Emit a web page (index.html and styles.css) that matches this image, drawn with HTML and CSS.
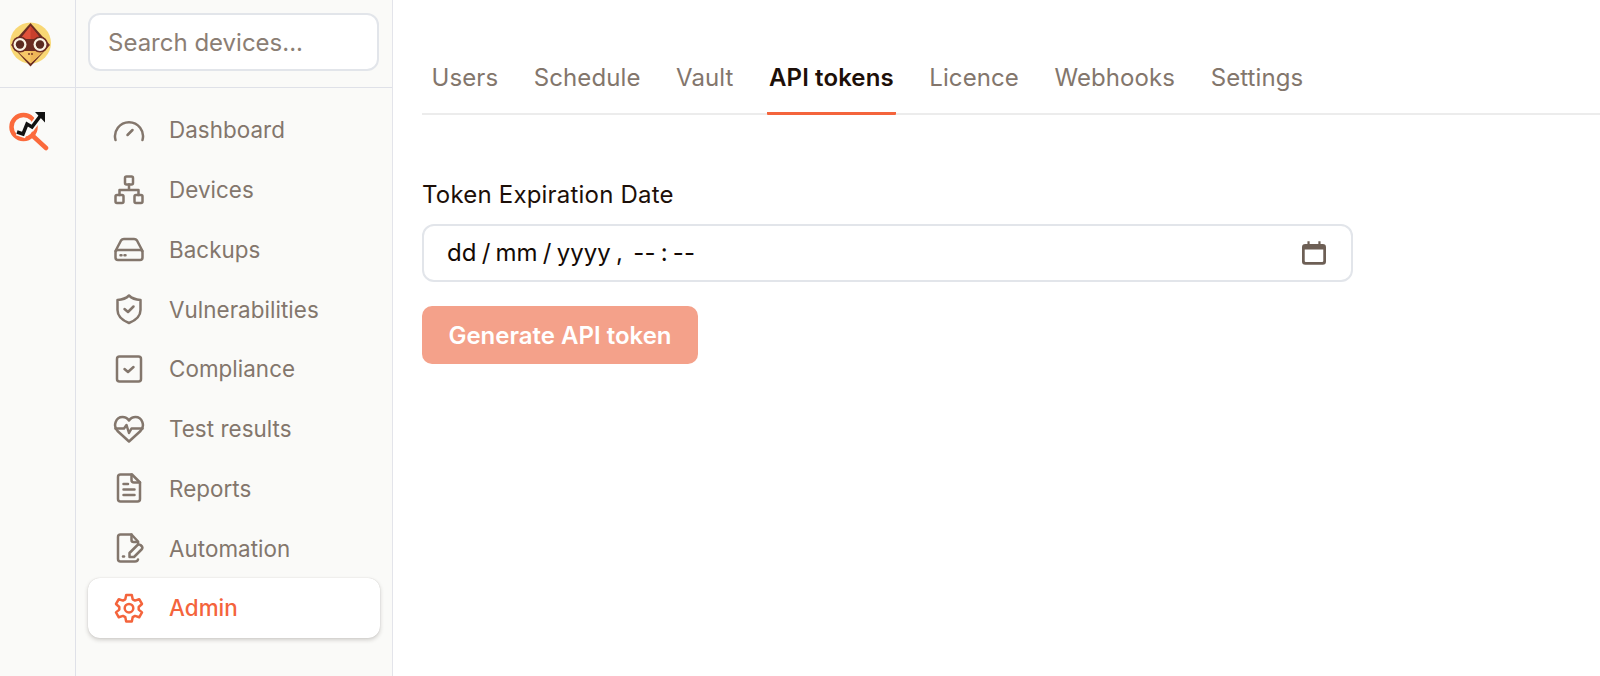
FILE: index.html
```html
<!DOCTYPE html>
<html lang="en">
<head>
<meta charset="utf-8">
<title>API tokens</title>
<link rel="stylesheet" href="styles.css">
</head>
<body>
<div class="app">
  <aside class="rail">
    <div class="rail-top">
      <svg class="logo" viewBox="0 0 42 46" width="42" height="46">
        <circle cx="20.500" cy="21" r="20.500" fill="#f8d774"/>
        <path d="M20.500 1 L40 23 L20.500 44.500 L1 23Z" fill="#6b2c22"/>
        <path d="M20.500 4 L31 17 H10Z" fill="#e0523a"/>
        <path d="M20.500 4 L31 17 H20.500Z" fill="#c93f2c"/>
        <path d="M20.500 41.500 L7 29 H34Z" fill="#f6c768"/>
        <path d="M20.500 41.500 V29 H34Z" fill="#eeb658"/>
        <circle cx="10" cy="22.500" r="8" fill="#6b2c22"/>
        <circle cx="30" cy="22.500" r="8" fill="#6b2c22"/>
        <circle cx="10" cy="22.500" r="6.500" fill="#fbf3e4"/>
        <circle cx="30" cy="22.500" r="6.500" fill="#fbf3e4"/>
        <circle cx="10" cy="22.500" r="4.200" fill="#5b2a20"/>
        <circle cx="30" cy="22.500" r="4.200" fill="#5b2a20"/>
        <circle cx="19" cy="32" r=".9" fill="#6b2c22"/>
        <circle cx="22" cy="32" r=".9" fill="#6b2c22"/>
      </svg>
    </div>
    <div class="rail-app">
      <svg viewBox="0 0 42 42" width="42" height="42">
        <circle cx="15.500" cy="18" r="12" fill="none" stroke="#fb6a3c" stroke-width="4.500"/>
        <path d="M25.500 27.500 L38 39" stroke="#fb6a3c" stroke-width="4.500" stroke-linecap="round"/>
        <path d="M9 23 L15 25 L19 15 L24 18 L33 6" fill="none" stroke="#fafaf8" stroke-width="7"/>
        <path d="M9 23 L15 25 L19 15 L24 18 L33 6" fill="none" stroke="#111" stroke-width="3.500"/>
        <path d="M27 3 H37 V13.500 Z" fill="#111"/>
      </svg>
    </div>
  </aside>
  <aside class="sidebar">
    <div class="search-area">
      <div class="search">Search devices...</div>
    </div>
    <nav class="nav">
      <a class="nav-item">
        <svg class="nav-icon" viewBox="0 0 32 32"><path d="M2.500 26 A14 14 0 1 1 29.500 26"/><path d="M14.500 21 L19.500 16"/></svg>
        <span>Dashboard</span>
      </a>
      <a class="nav-item">
        <svg class="nav-icon" viewBox="0 0 32 32"><rect x="12" y="2.500" width="8" height="8" rx="1.500"/><rect x="2.500" y="21" width="8" height="8" rx="1.500"/><rect x="21.500" y="21" width="8" height="8" rx="1.500"/><path d="M16 10.500 V16 M6.500 21 V16 H25.500 V21"/></svg>
        <span>Devices</span>
      </a>
      <a class="nav-item">
        <svg class="nav-icon" viewBox="0 0 32 32"><path d="M2.500 18 L8 7.500 Q9 6 11 6 H21 Q23 6 24 7.500 L29.500 18"/><rect x="2.500" y="17" width="27" height="10" rx="2.500"/><path d="M7.500 22.300 H8.500 M11.500 22.300 H12.500"/></svg>
        <span>Backups</span>
      </a>
      <a class="nav-item">
        <svg class="nav-icon" viewBox="0 0 32 32"><path d="M16 2.500 Q20 6.500 27.500 7 V17 Q27.500 25.500 16 30 Q4.500 25.500 4.500 17 V7 Q12 6.500 16 2.500Z"/><path d="M11.500 16 L15 19 L20.500 13.500"/></svg>
        <span>Vulnerabilities</span>
      </a>
      <a class="nav-item">
        <svg class="nav-icon" viewBox="0 0 32 32"><rect x="4" y="3.500" width="24" height="25" rx="2.500"/><path d="M11.500 16 L15 19 L20.500 14"/></svg>
        <span>Compliance</span>
      </a>
      <a class="nav-item">
        <svg class="nav-icon" viewBox="0 0 32 32"><path d="M16 28.500 L4.500 18 C-.500 12.500 3 4 9.500 4 C12 4 14.500 5.200 16 7.500 C17.500 5.200 20 4 22.500 4 C29 4 32.500 12.500 27.500 18Z"/><path d="M2.500 15.500 H11 L13.500 12 L16 20 L18.500 15.500 H29.500"/></svg>
        <span>Test results</span>
      </a>
      <a class="nav-item">
        <svg class="nav-icon" viewBox="0 0 32 32"><path d="M19 2.500 H7.500 Q5 2.500 5 5 V27 Q5 29.500 7.500 29.500 H24.500 Q27 29.500 27 27 V10.500Z"/><path d="M18.500 2.500 V8 Q18.500 10.500 21 10.500 H27"/><path d="M10.500 12 H15 M10.500 17.500 H21.500 M10.500 23 H21.500"/></svg>
        <span>Reports</span>
      </a>
      <a class="nav-item">
        <svg class="nav-icon" viewBox="0 0 32 32"><path d="M25 11 V9.500 L18.500 2.500 H7.500 Q5 2.500 5 5 V27 Q5 29.500 7.500 29.500 H22 Q24.500 29.500 25 27.500"/><path d="M18.500 2.500 V8 Q18.500 10 20.500 10 H25"/><path d="M10 24.500 H11"/><path d="M16.500 25 V21 L24 13.500 Q25.500 12 27.500 13 L29 14.500 Q30 16 28.500 17.500 L21 25Z"/></svg>
        <span>Automation</span>
      </a>
      <a class="nav-item active">
        <svg class="nav-icon" viewBox="0 0 32 32"><path d="M13.200 3 L18.800 3 L19.700 7.300 L22 8.600 L26.200 7.200 L29 12 L25.700 15 V17.600 L29 20.400 L26.200 25.300 L22 23.900 L19.700 25.200 L18.800 29.500 H13.200 L12.300 25.200 L10 23.900 L5.800 25.300 L3 20.400 L6.300 17.600 V15 L3 12 L5.800 7.200 L10 8.600 L12.300 7.300Z"/><circle cx="16" cy="16.200" r="4.300"/></svg>
        <span>Admin</span>
      </a>
    </nav>
  </aside>
  <main class="main">
    <div class="tabs">
      <a class="tab">Users</a>
      <a class="tab">Schedule</a>
      <a class="tab">Vault</a>
      <a class="tab current">API tokens</a>
      <a class="tab">Licence</a>
      <a class="tab">Webhooks</a>
      <a class="tab">Settings</a>
    </div>
    <form class="form">
      <div class="label">Token Expiration Date</div>
      <div class="date-field">
        <span class="date-text">dd / mm / yyyy ,&nbsp; -- : --</span>
        <svg class="cal" viewBox="1 1.500 22 21.500" width="24" height="24"><path d="M6 1.500 H8 V4 H16 V1.500 H18 V4 H20 Q23 4 23 7 V20 Q23 23 20 23 H4 Q1 23 1 20 V7 Q1 4 4 4 H6Z M3.500 9 V19.500 Q3.500 20.500 4.500 20.500 H19.500 Q20.500 20.500 20.500 19.500 V9Z" fill="#6d5f55" fill-rule="evenodd"/></svg>
      </div>
      <button class="generate" type="button">Generate API token</button>
    </form>
  </main>
</div>
</body>
</html>
```

FILE: styles.css
```css
* { box-sizing: border-box; }
html, body { margin: 0; height: 100%; }
body {
  font-family: Inter, "Liberation Sans", sans-serif;
  background: #fff;
  color: #1d0f08;
  overflow: hidden;
}
.app { display: flex; height: 676px; }
.rail {
  width: 76px;
  flex: none;
  background: #fafaf8;
  border-right: 1px solid #dfe1e8;
}
.rail-top {
  height: 88px;
  border-bottom: 1px solid #dfe1e8;
  padding: 22px 0 0 10px;
}
.logo { display: block; }
.rail-app { padding: 21px 0 0 8px; }
.rail-app svg { display: block; }
.sidebar {
  width: 316.500px;
  flex: none;
  background: #fafaf8;
  border-right: 1px solid #e3e4ea;
}
.search-area {
  height: 88px;
  padding: 13px 13px 0 12px;
  border-bottom: 1px solid #dfe1e8;
}
.search {
  height: 58px;
  background: #fff;
  border: 2px solid #e2e5ea;
  border-radius: 12px;
  display: flex;
  align-items: center;
  padding-left: 18px;
  font-size: 24px;
  color: #8b7e74;
}
.nav {
  display: flex;
  flex-direction: column;
  padding: 12px 12px 0;
}
.nav-item {
  height: 59.750px;
  display: flex;
  align-items: center;
  padding-left: 25px;
  gap: 24px;
  font-size: 22.400px;
  letter-spacing: .05px;
  color: #83766c;
  border-radius: 12px;
}
.nav-icon {
  width: 32px;
  height: 32px;
  flex: none;
  fill: none;
  stroke: currentColor;
  stroke-width: 2.500;
  stroke-linecap: round;
  stroke-linejoin: round;
}
.nav-item.active {
  background: #fff;
  color: #f4643c;
  font-weight: 500;
  box-shadow: 0 2px 4px rgba(40, 30, 25, .2), 0 0 1px rgba(40, 30, 25, .2);
}
.main { flex: 1; padding: 0 0 0 29.500px; min-width: 0; }
.tabs {
  height: 115px;
  display: flex;
  align-items: flex-end;
  gap: 31.500px;
  padding-left: 7.500px;
  border-bottom: 2px solid #ececec;
}
.tab {
  height: 74px;
  padding: 2px 2px 0;
  margin-bottom: -2px;
  display: flex;
  align-items: center;
  font-size: 24px;
  letter-spacing: .1px;
  color: #83766c;
  border-bottom: 3px solid transparent;
}
.tab.current {
  color: #1d0f08;
  font-weight: 600;
  border-bottom-color: #f4643c;
  border-radius: 0 0 1px 1px;
}
.form { padding-top: 66px; width: 931px; }
.label { font-size: 24px; line-height: 27px; letter-spacing: .2px; color: #1d0f08; }
.date-field {
  margin-top: 16px;
  height: 58px;
  display: flex;
  align-items: center;
  justify-content: space-between;
  padding: 0 25px 0 23px;
  border: 2px solid #e2e5ea;
  border-radius: 12px;
  background: #fff;
}
.date-text { font-size: 24px; color: #140a05; word-spacing: -1.500px; margin-top: -2px; }
.cal { display: block; }
.generate {
  display: block;
  margin-top: 24px;
  width: 276px;
  height: 58px;
  border: 0;
  border-radius: 10px;
  background: #f4a18a;
  color: #fff;
  font-family: inherit;
  font-size: 24px;
  font-weight: 600;
  padding: 0;
}
```
